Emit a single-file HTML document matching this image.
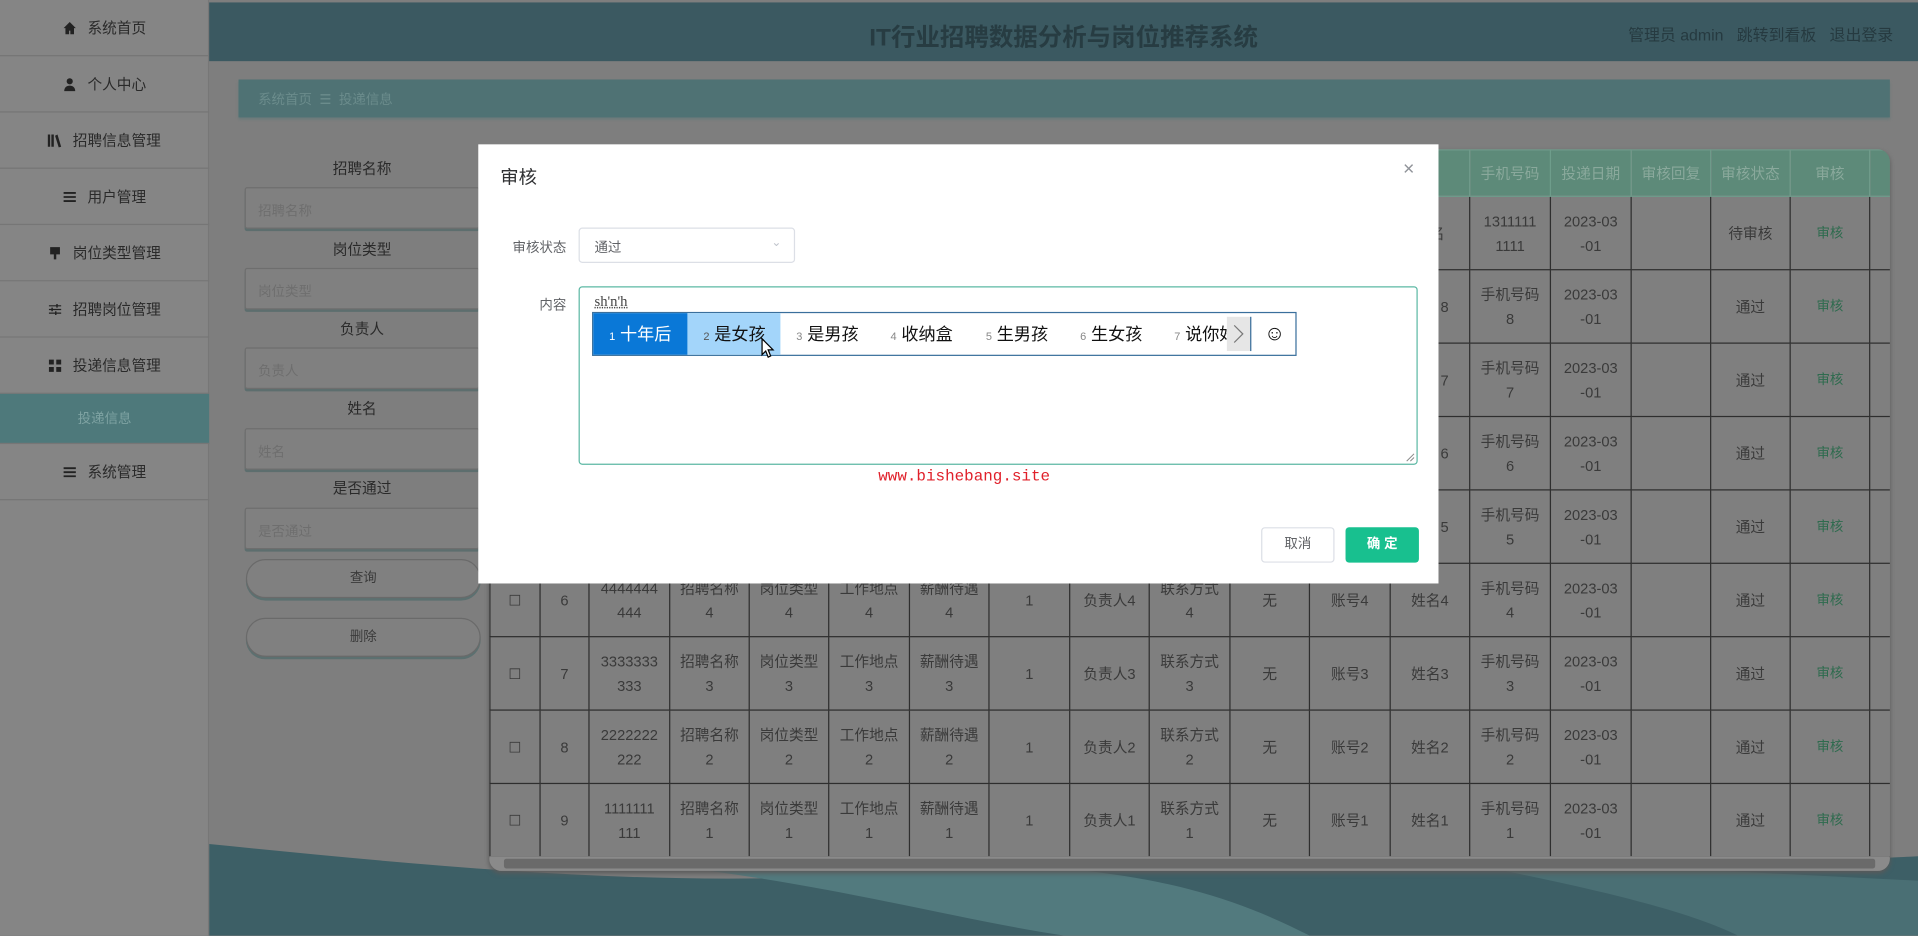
<!DOCTYPE html>
<html><head><meta charset="utf-8">
<style>
html,body{margin:0;padding:0;width:1918px;height:936px;overflow:hidden;background:#7d7d7d;}
*{box-sizing:border-box;}
#w{position:absolute;left:0;top:0;width:1568px;height:765px;transform:scale(1.22321);transform-origin:0 0;font-family:"Liberation Sans","Noto Sans CJK SC",sans-serif;background:#7e7e7e;overflow:hidden;}
.abs{position:absolute;}
.side{left:0;top:0;width:171px;height:765px;background:#858585;border-right:1px solid #777;}
.si{position:absolute;left:0;width:171px;height:46px;border-bottom:1px solid #767676;font-size:12px;color:#2a2a2a;display:flex;align-items:center;justify-content:center;gap:8px;}
.si svg{width:12px;height:12px;}
.hdr{left:171px;top:2px;width:1397px;height:48px;background:#3b5961;}
.lbl{position:absolute;width:192px;left:200px;text-align:center;font-size:12px;color:#2a2a2a;}
.inp{position:absolute;left:200px;width:192px;height:34px;border:1px solid #6e6e6e;background:#808080;border-radius:2px;box-shadow:0 2px 0 #5d6e6e;font-size:11px;color:#6e6e6e;padding:10px 10px;}
.btn{position:absolute;left:201px;width:192px;height:32px;border:1px solid #6a6a6a;border-radius:16px;background:#808080;box-shadow:0 2px 0 #5c7070;text-align:center;line-height:30px;font-size:11px;color:#3a3a3a;}
table{border-collapse:collapse;table-layout:fixed;}
td,th{border:1px solid #2e2e2e;text-align:center;font-size:12px;color:#3a3a3a;font-weight:normal;line-height:20px;padding:0;overflow:hidden;}
th{background:#5d8a79;color:#8aa99c;height:38px;border-color:#6e9d8b;}
td{height:60px;background:#7f7f7f;}
.g{color:#2e6b4e;font-size:11px;}
.modal{left:391px;top:118px;width:785px;height:359px;background:#fff;}
</style></head><body>
<div id="w">
<div class="abs side">
 <div class="si" style="top:0"><svg viewBox="0 0 12 12"><path d="M6 1L1 6h1.5v5h3V8h1v3h3V6H11z" fill="#222"/></svg>系统首页</div>
 <div class="si" style="top:46px"><svg viewBox="0 0 12 12"><circle cx="6" cy="3.5" r="2.5" fill="#222"/><path d="M1.5 11.5c0-3 2-4.5 4.5-4.5s4.5 1.5 4.5 4.5z" fill="#222"/></svg>个人中心</div>
 <div class="si" style="top:92px"><svg viewBox="0 0 12 12"><path d="M0 1h2v10H0zM3 1h2v10H3zM6 2l2-1 3 10-2 .5z" fill="#222"/></svg>招聘信息管理</div>
 <div class="si" style="top:138px"><svg viewBox="0 0 12 12"><path d="M1 2h10v1.5H1zM1 5.3h10v1.5H1zM1 8.6h10v1.5H1z" fill="#222"/></svg>用户管理</div>
 <div class="si" style="top:184px"><svg viewBox="0 0 12 12"><path d="M2 1h8v6H2zM5 7h2v4H5z" fill="#222"/></svg>岗位类型管理</div>
 <div class="si" style="top:230px"><svg viewBox="0 0 12 12"><path d="M1 2.5h10v1H1zM1 5.5h10v1H1zM1 8.5h10v1H1zM7 1.5h1.2v3H7zM3 4.5h1.2v3H3zM6 7.5h1.2v3H6z" fill="#222"/></svg>招聘岗位管理</div>
 <div class="si" style="top:276px"><svg viewBox="0 0 12 12"><path d="M1 1h4v4H1zM7 1h4v4H7zM1 7h4v4H1zM7 7h4v4H7z" fill="#222"/></svg>投递信息管理</div>
 <div class="si" style="top:322px;height:41px;background:#4e797b;color:#7fa3a3;font-size:11px;">投递信息</div>
 <div class="si" style="top:363px"><svg viewBox="0 0 12 12"><path d="M1 2h10v1.5H1zM1 5.3h10v1.5H1zM1 8.6h10v1.5H1z" fill="#222"/></svg>系统管理</div>
</div>
<div class="abs hdr">
 <div class="abs" style="left:0;width:1397px;top:12px;text-align:center;font-size:20px;font-weight:bold;color:#273c42;">IT行业招聘数据分析与岗位推荐系统</div>
 <div class="abs" style="left:1160px;top:16px;font-size:13px;color:#263a40;white-space:nowrap;">管理员 admin&nbsp;&nbsp;&nbsp;跳转到看板&nbsp;&nbsp;&nbsp;退出登录</div>
</div>
<div class="abs" style="left:195px;top:65px;width:1350px;height:31px;background:#4f7274;box-shadow:0 2px 2px #6b7b7b;">
 <div class="abs" style="left:16px;top:8px;font-size:11px;color:#6b8c8c;">系统首页 &nbsp;☰&nbsp; 投递信息</div>
</div>
<div class="lbl" style="top:129px">招聘名称</div><div class="inp" style="top:153px">招聘名称</div>
<div class="lbl" style="top:195px">岗位类型</div><div class="inp" style="top:219px">岗位类型</div>
<div class="lbl" style="top:260px">负责人</div><div class="inp" style="top:284px">负责人</div>
<div class="lbl" style="top:325px">姓名</div><div class="inp" style="top:350px">姓名</div>
<div class="lbl" style="top:390px">是否通过</div><div class="inp" style="top:415px">是否通过</div>
<div class="btn" style="top:457px">查询</div>
<div class="btn" style="top:505px">删除</div>

<svg class="abs" style="left:171px;top:660px" width="1397" height="105" viewBox="0 0 1397 105">
 <path d="M0 30 C200 50 400 70 600 50 C800 30 1000 60 1397 40 V105 H0Z" fill="#3d5f66"/>
 <path d="M350 45 C500 60 600 90 700 105 H900 C850 80 800 60 700 50Z" fill="#527a7e"/>
 <path d="M1000 40 C1100 60 1200 80 1250 105 H1397 V60Z" fill="#4a6f74"/>
</svg>

<div class="abs" style="left:400px;top:122px;width:1145px;height:590px;background:#7f7f7f;border-radius:10px;overflow:hidden;box-shadow:0 2px 4px #5a5a5a;">
<table style="width:1146px;">
<colgroup><col style="width:41px"><col style="width:40px"><col style="width:66px"><col style="width:65px"><col style="width:65px"><col style="width:66px"><col style="width:65px"><col style="width:66px"><col style="width:65px"><col style="width:66px"><col style="width:65px"><col style="width:66px"><col style="width:65px"><col style="width:66px"><col style="width:66px"><col style="width:65px"><col style="width:65px"><col style="width:65px"><col style="width:18px"></colgroup>
<tr><th></th><th>#</th><th></th><th></th><th></th><th></th><th></th><th></th><th></th><th></th><th></th><th></th><th></th><th>手机号码</th><th>投递日期</th><th>审核回复</th><th>审核状态</th><th>审核</th><th></th></tr>
<tr><td>☐</td><td>1</td><td></td><td></td><td></td><td></td><td></td><td>1</td><td></td><td></td><td>无</td><td></td><td>姓名</td><td>1311111<br>1111</td><td>2023-03<br>-01</td><td></td><td>待审核</td><td class="g">审核</td><td></td></tr>
<tr><td>☐</td><td>2</td><td>8888888<br>888</td><td>招聘名称<br>8</td><td>岗位类型<br>8</td><td>工作地点<br>8</td><td>薪酬待遇<br>8</td><td>1</td><td>负责人8</td><td>联系方式<br>8</td><td>无</td><td>账号8</td><td>姓名8</td><td>手机号码<br>8</td><td>2023-03<br>-01</td><td></td><td>通过</td><td class="g">审核</td><td></td></tr>
<tr><td>☐</td><td>3</td><td>7777777<br>777</td><td>招聘名称<br>7</td><td>岗位类型<br>7</td><td>工作地点<br>7</td><td>薪酬待遇<br>7</td><td>1</td><td>负责人7</td><td>联系方式<br>7</td><td>无</td><td>账号7</td><td>姓名7</td><td>手机号码<br>7</td><td>2023-03<br>-01</td><td></td><td>通过</td><td class="g">审核</td><td></td></tr>
<tr><td>☐</td><td>4</td><td>6666666<br>666</td><td>招聘名称<br>6</td><td>岗位类型<br>6</td><td>工作地点<br>6</td><td>薪酬待遇<br>6</td><td>1</td><td>负责人6</td><td>联系方式<br>6</td><td>无</td><td>账号6</td><td>姓名6</td><td>手机号码<br>6</td><td>2023-03<br>-01</td><td></td><td>通过</td><td class="g">审核</td><td></td></tr>
<tr><td>☐</td><td>5</td><td>5555555<br>555</td><td>招聘名称<br>5</td><td>岗位类型<br>5</td><td>工作地点<br>5</td><td>薪酬待遇<br>5</td><td>1</td><td>负责人5</td><td>联系方式<br>5</td><td>无</td><td>账号5</td><td>姓名5</td><td>手机号码<br>5</td><td>2023-03<br>-01</td><td></td><td>通过</td><td class="g">审核</td><td></td></tr>
<tr><td>☐</td><td>6</td><td>4444444<br>444</td><td>招聘名称<br>4</td><td>岗位类型<br>4</td><td>工作地点<br>4</td><td>薪酬待遇<br>4</td><td>1</td><td>负责人4</td><td>联系方式<br>4</td><td>无</td><td>账号4</td><td>姓名4</td><td>手机号码<br>4</td><td>2023-03<br>-01</td><td></td><td>通过</td><td class="g">审核</td><td></td></tr>
<tr><td>☐</td><td>7</td><td>3333333<br>333</td><td>招聘名称<br>3</td><td>岗位类型<br>3</td><td>工作地点<br>3</td><td>薪酬待遇<br>3</td><td>1</td><td>负责人3</td><td>联系方式<br>3</td><td>无</td><td>账号3</td><td>姓名3</td><td>手机号码<br>3</td><td>2023-03<br>-01</td><td></td><td>通过</td><td class="g">审核</td><td></td></tr>
<tr><td>☐</td><td>8</td><td>2222222<br>222</td><td>招聘名称<br>2</td><td>岗位类型<br>2</td><td>工作地点<br>2</td><td>薪酬待遇<br>2</td><td>1</td><td>负责人2</td><td>联系方式<br>2</td><td>无</td><td>账号2</td><td>姓名2</td><td>手机号码<br>2</td><td>2023-03<br>-01</td><td></td><td>通过</td><td class="g">审核</td><td></td></tr>
<tr><td>☐</td><td>9</td><td>1111111<br>111</td><td>招聘名称<br>1</td><td>岗位类型<br>1</td><td>工作地点<br>1</td><td>薪酬待遇<br>1</td><td>1</td><td>负责人1</td><td>联系方式<br>1</td><td>无</td><td>账号1</td><td>姓名1</td><td>手机号码<br>1</td><td>2023-03<br>-01</td><td></td><td>通过</td><td class="g">审核</td><td></td></tr>
</table>
<div class="abs" style="left:0;top:578px;width:1145px;height:12px;background:#8a8a8a;"><div style="margin:2px 12px;height:8px;background:#6a6a6a;border-radius:2px;"></div></div>
</div>

<div class="abs modal">
 <div class="abs" style="left:18px;top:16px;font-size:15px;color:#303133;">审核</div>
 <div class="abs" style="left:756px;top:12px;font-size:16px;color:#909399;">×</div>
 <div class="abs" style="left:20px;top:76px;width:52px;text-align:right;font-size:11px;color:#606266;">审核状态</div>
 <div class="abs" style="left:82px;top:68px;width:177px;height:29px;border:1px solid #dcdfe6;border-radius:3px;font-size:11px;color:#606266;padding:7px 12px;">通过<span style="position:absolute;right:10px;top:6px;color:#c0c4cc;font-size:10px;">&#8964;</span></div>
 <div class="abs" style="left:20px;top:123px;width:52px;text-align:right;font-size:11px;color:#606266;">内容</div>
 <div class="abs" style="left:82px;top:116px;width:686px;height:146px;border:1px solid #5cb8a4;border-radius:3px;">
  <div class="abs" style="left:12px;top:4px;font-family:'Liberation Serif',serif;font-size:12px;color:#444;text-decoration:underline dotted;">sh'n'h</div>
  <svg class="abs" style="right:1px;bottom:1px" width="8" height="8"><path d="M7 1L1 7M7 4L4 7" stroke="#888" stroke-width="0.8"/></svg>
 </div>
 <div class="abs" style="left:93px;top:137px;width:576px;height:36px;border:1px solid #3a6f9c;background:#fff;font-family:'Liberation Sans','Noto Sans CJK SC',sans-serif;font-size:14px;color:#111;">
  <div class="abs" style="left:0;top:0;width:77px;height:34px;background:#0a78d7;color:#fff;line-height:34px;padding-left:13px;"><span style="font-size:9px">1</span> 十年后</div>
  <div class="abs" style="left:77px;top:0;width:76px;height:34px;background:#a3d5fa;line-height:34px;padding-left:13px;"><span style="font-size:9px;color:#555">2</span> 是女孩</div>
  <div class="abs" style="left:166px;top:0;line-height:34px;"><span style="font-size:9px;color:#888">3</span> 是男孩</div>
  <div class="abs" style="left:243px;top:0;line-height:34px;"><span style="font-size:9px;color:#888">4</span> 收纳盒</div>
  <div class="abs" style="left:321px;top:0;line-height:34px;"><span style="font-size:9px;color:#888">5</span> 生男孩</div>
  <div class="abs" style="left:398px;top:0;line-height:34px;"><span style="font-size:9px;color:#888">6</span> 生女孩</div>
  <div class="abs" style="left:475px;top:0;width:44px;line-height:34px;overflow:hidden;white-space:nowrap;"><span style="font-size:9px;color:#888">7</span> 说你好</div>
  <div class="abs" style="left:518px;top:3px;width:20px;height:28px;background:#e6e6e6;border-right:1px solid #3a6f9c;"><svg width="20" height="28"><path d="M6 7l7 7-7 7" stroke="#777" fill="none"/></svg></div>
  <div class="abs" style="left:539px;top:0;width:36px;height:34px;text-align:center;line-height:34px;font-size:17px;">☺</div>
  <svg class="abs" style="left:137px;top:20px" width="12" height="18"><path d="M1 1v13l3-3 2 5 2-1-2-5h4z" fill="#fff" stroke="#000" stroke-width="1"/></svg>
 </div>
 <div class="abs" style="left:327px;top:264px;font-family:'Liberation Mono',monospace;font-size:13px;color:#e0202a;">www.bishebang.site</div>
 <div class="abs" style="left:640px;top:313px;width:60px;height:29px;border:1px solid #dcdfe6;border-radius:3px;text-align:center;line-height:27px;font-size:11px;color:#606266;">取消</div>
 <div class="abs" style="left:709px;top:313px;width:60px;height:29px;background:#18c08f;border-radius:3px;text-align:center;line-height:29px;font-size:11px;color:#fff;font-weight:bold;">确 定</div>
</div>
</div>
</body></html>
